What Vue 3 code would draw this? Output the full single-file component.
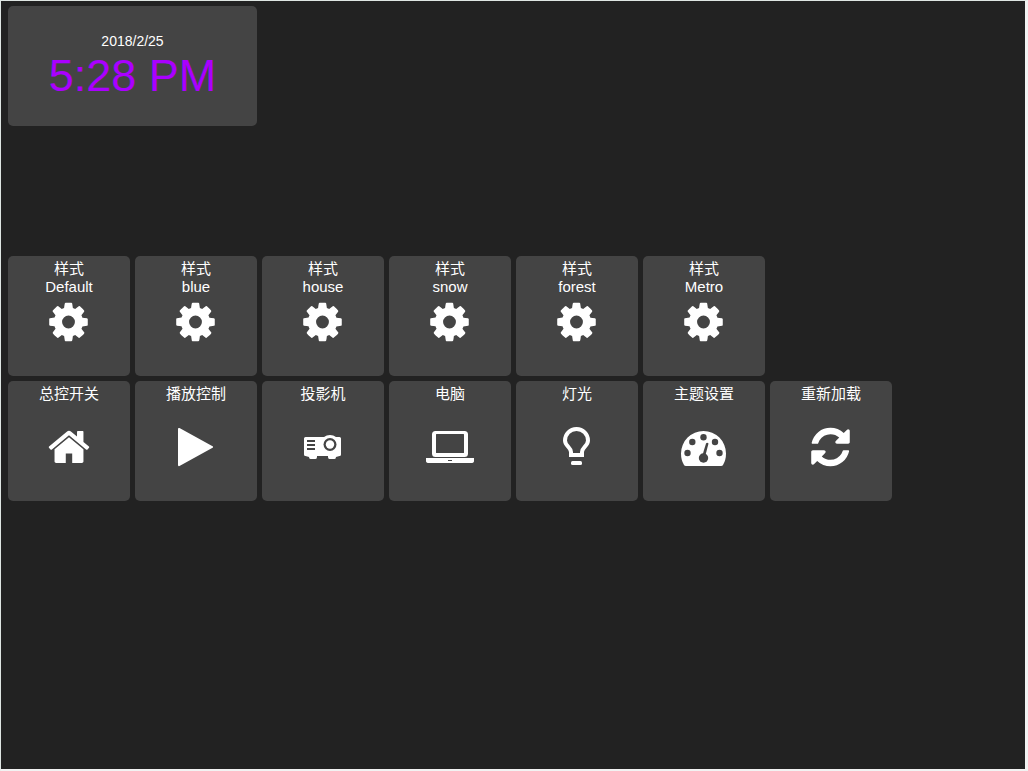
<script setup>
const themes = ['Default', 'blue', 'house', 'snow', 'forest', 'Metro']

const actions = [
  { label: '总控开关', icon: 'home' },
  { label: '播放控制', icon: 'play' },
  { label: '投影机', icon: 'projector' },
  { label: '电脑', icon: 'laptop' },
  { label: '灯光', icon: 'bulb' },
  { label: '主题设置', icon: 'gauge' },
  { label: '重新加载', icon: 'refresh' }
]
</script>

<template>
  <main class="panel">
    <section class="clock">
      <time class="date">2018/2/25</time>
      <time class="time">5:28 PM</time>
    </section>

    <section class="row themes">
      <button v-for="name in themes" :key="name" type="button" class="tile">
        <span class="label">样式<br />{{ name }}</span>
        <svg class="icon" viewBox="0 0 48 40" aria-hidden="true">
          <path
            transform="translate(1 -2.500) scale(.0251)"
            d="M1152 896q0-106-75-181t-181-75-181 75-75 181 75 181 181 75 181-75 75-181zm512-109v222q0 12-8 23t-20 13l-185 28q-19 54-39 91 35 50 107 138 10 12 10 25t-9 23q-27 37-99 108t-94 71q-12 0-26-9l-138-108q-44 23-91 38-16 136-29 186-7 28-36 28h-222q-14 0-24.500-8.500t-11.500-21.500l-28-184q-49-16-90-37l-141 107q-10 9-25 9-14 0-25-11-126-114-165-168-7-10-7-23 0-12 8-23 15-21 51-66.500t54-70.500q-27-50-41-99l-183-27q-13-2-21-12.500t-8-23.500v-222q0-12 8-23t19-13l186-28q14-46 39-92-40-57-107-138-10-12-10-24 0-10 9-23 26-36 98.500-107.500t94.500-71.500q13 0 26 10l138 107q44-23 91-38 16-136 29-186 7-28 36-28h222q14 0 24.500 8.500t11.500 21.500l28 184q49 16 90 37l142-107q9-9 24-9 13 0 25 10 129 119 165 170 7 8 7 22 0 12-8 23-15 21-51 66.500t-54 70.500q26 50 41 98l183 28q13 2 21 12.500t8 23.500z"
          />
        </svg>
      </button>
    </section>

    <section class="row">
      <button v-for="item in actions" :key="item.icon" type="button" class="tile">
        <span class="label">{{ item.label }}</span>
        <svg class="icon" viewBox="0 0 48 40" aria-hidden="true">
          <path
            v-if="item.icon === 'home'"
            transform="translate(1.500 -2.500) scale(.0251)"
            d="M1472 992v480q0 26-19 45t-45 19h-384v-384h-256v384h-384q-26 0-45-19t-19-45v-480q0-1 .5-3t.5-3l575-474 575 474q1 2 1 6zm223-69l-62 74q-8 9-21 11h-3q-13 0-21-7l-692-577-692 577q-12 8-24 7-13-2-21-11l-62-74q-8-10-7-23.500t11-21.500l719-599q32-26 76-26t76 26l244 204v-195q0-14 9-23t23-9h192q14 0 23 9t9 23v408l219 182q10 8 11 21.500t-7 23.500z"
          />
          <path v-else-if="item.icon === 'play'" d="M6 2Q6 0.500 7.500 1L41 19.500V20.500L7.500 39Q6 39.500 6 38Z" />
          <g v-else-if="item.icon === 'projector'">
            <path d="M6.500 10H25Q27.500 8 31 8T37 10H40.500Q42 10 42 11.500V27.500Q42 29 40.500 29L37 30Q37 32 35.500 32H30.500Q29 32 29 30V29H18V30Q18 32 16.500 32H11.500Q10 32 10 30L6.500 29Q5 29 5 27.500V11.500Q5 10 6.500 10Z" />
            <path class="hole" d="M8 13h8v2H8zM8 17h8v2H8zM8 21h8v2H8z" />
            <circle class="hole" cx="31" cy="17.500" r="6.500" />
            <circle cx="31" cy="17.500" r="4.200" />
          </g>
          <g v-else-if="item.icon === 'laptop'">
            <path fill-rule="evenodd" d="M9.500 4H38.500Q42 4 42 7.500V26.500Q42 30 38.500 30H9.500Q6 30 6 26.500V7.500Q6 4 9.500 4ZM10.500 7Q10 7 10 7.500V25.500Q10 26 10.500 26H37.500Q38 26 38 25.500V7.500Q38 7 37.500 7Z" />
            <path d="M0 31H48V34Q48 36 45 36H3Q0 36 0 34Z" />
            <path class="hole" d="M22 33h4v1h-4z" />
          </g>
          <g v-else-if="item.icon === 'bulb'">
            <path class="bulb-line" d="M18 28V25C18 20 12 19 12 13.500C12 7 17 2 23.500 2S35 7 35 13.500C35 19 29 20 29 25V28Z" />
            <rect x="18" y="34" width="11" height="4" rx="1.500" />
          </g>
          <g v-else-if="item.icon === 'gauge'">
            <path d="M1 26.500A22.500 22.500 0 0 1 46 26.500Q46 33 43 38Q42.500 39 41 39H6Q4.500 39 4 38Q1 33 1 26.500Z" />
            <g class="hole">
              <circle cx="7.500" cy="26" r="3.200" />
              <circle cx="12.300" cy="15" r="3.200" />
              <circle cx="23.500" cy="10.200" r="3.200" />
              <circle cx="35" cy="15" r="3.200" />
              <circle cx="39.500" cy="26" r="3.200" />
              <circle cx="23.500" cy="31" r="4.700" />
              <path d="M22.500 28L26 16.500Q27 15 28.500 16.500L25.500 28Z" />
            </g>
          </g>
          <path
            v-else
            transform="translate(1 -2.500) scale(.0251)"
            d="M1639 1056q0 5-1 7-64 268-268 434.500t-478 166.500q-146 0-282.500-55t-243.500-157l-129 129q-19 19-45 19t-45-19-19-45v-448q0-26 19-45t45-19h448q26 0 45 19t19 45-19 45l-137 137q71 66 161 102t187 36q134 0 250-65t186-179q11-17 53-117 8-23 30-23h192q13 0 22.500 9.500t9.500 22.500zm25-800v448q0 26-19 45t-45 19h-448q-26 0-45-19t-19-45 19-45l138-138q-148-137-349-137-134 0-250 65t-186 179q-11 17-53 117-8 23-30 23h-199q-13 0-22.500-9.500t-9.500-22.500v-7q65-268 270-434.500t480-166.500q146 0 284 55.500t245 156.500l130-129q19-19 45-19t45 19 19 45z"
          />
        </svg>
      </button>
    </section>
  </main>
</template>

<style>
body {
  background: #222;
}
</style>

<style scoped>
.panel {
  box-sizing: border-box;
  min-height: 100vh;
  padding: 5px 7px;
  display: flex;
  flex-direction: column;
  gap: 5px;
  background: #222;
  border: 1px solid #dfe6e3;
  border-right: 3px solid #f2f2f2;
  border-bottom: 2px solid #f2f2f2;
  font-family: "Liberation Sans", "Noto Sans CJK SC", sans-serif;
  color: #fff;
}

.clock,
.tile {
  box-sizing: border-box;
  height: 120px;
  background: #444;
  border-radius: 5px;
}

.clock {
  width: 249px;
  padding-top: 26px;
  display: flex;
  flex-direction: column;
  align-items: center;
}

.date {
  font-size: 14px;
  line-height: 18px;
}

.time {
  font-size: 45px;
  line-height: 52px;
  color: #a0f;
}

.row {
  display: flex;
  flex-wrap: wrap;
  gap: 5px;
}

.themes {
  margin-top: 125px;
}

.tile {
  width: 122px;
  border: 0;
  padding: 4px 0 0;
  display: flex;
  flex-direction: column;
  align-items: center;
  gap: 6px;
  font: inherit;
  color: inherit;
  cursor: pointer;
}

.label {
  min-height: 36px;
  font-size: 15px;
  line-height: 18px;
}

.icon {
  width: 48px;
  height: 40px;
  fill: #fff;
}

.hole {
  fill: #444;
}

.bulb-line {
  fill: none;
  stroke: #fff;
  stroke-width: 4;
}
</style>
